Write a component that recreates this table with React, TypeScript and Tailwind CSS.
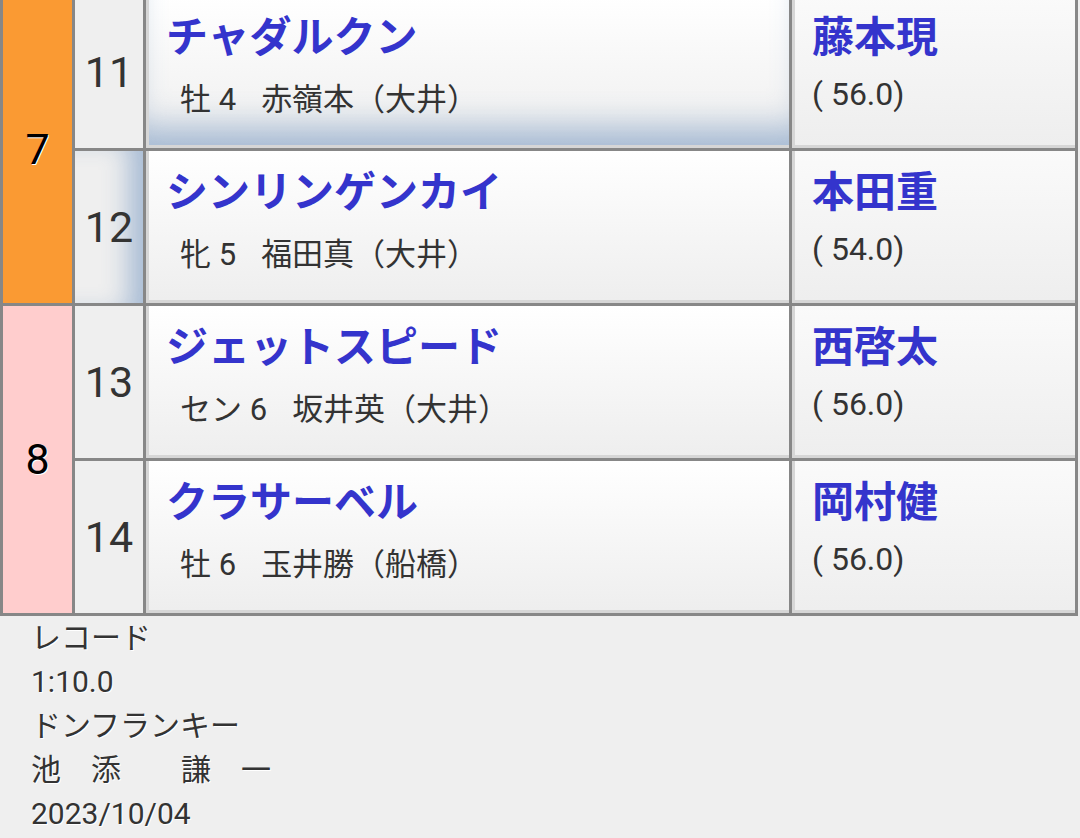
import React from "react";

type Horse = {
  no: number;
  name: string;
  sex: string;
  trainer: string;
  jockey: string;
  wt: string;
  nameCellGlow?: boolean;
  noCellGlow?: boolean;
};

type Waku = { waku: number; bg: string; horses: Horse[] };

const data: Waku[] = [
  {
    waku: 7,
    bg: "bg-[#fa9a33]",
    horses: [
      { no: 11, name: "チャダルクン", sex: "牡 4", trainer: "赤嶺本（大井）", jockey: "藤本現", wt: "( 56.0)", nameCellGlow: true },
      { no: 12, name: "シンリンゲンカイ", sex: "牝 5", trainer: "福田真（大井）", jockey: "本田重", wt: "( 54.0)", noCellGlow: true },
    ],
  },
  {
    waku: 8,
    bg: "bg-[#ffcdcd]",
    horses: [
      { no: 13, name: "ジェットスピード", sex: "セン 6", trainer: "坂井英（大井）", jockey: "西啓太", wt: "( 56.0)" },
      { no: 14, name: "クラサーベル", sex: "牡 6", trainer: "玉井勝（船橋）", jockey: "岡村健", wt: "( 56.0)" },
    ],
  },
];

const font = { fontFamily: "Roboto, 'Noto Sans CJK JP', 'Noto Sans', sans-serif" };

export default function App() {
  return (
    <div className="min-h-[838px] w-[1080px] overflow-hidden bg-[#efefef] text-[#333]" style={font}>
      <div className="-mt-[7px] grid w-[1078px] grid-cols-[69px_68px_643px_283px] grid-rows-[repeat(4,152px)] gap-[3px] bg-[#878787] p-[3px]">
        {data.map((w) => (
          <React.Fragment key={w.waku}>
            <div className={`row-span-2 flex items-center justify-center ${w.bg} text-[43px] text-black [text-shadow:1px_1px_0_#fff]`}>
              {w.waku}
            </div>
            {w.horses.map((h) => (
              <React.Fragment key={h.no}>
                <div
                  className={`flex items-center justify-center bg-[#efefef] text-[43px] text-[#333] ${
                    h.noCellGlow ? "shadow-[inset_-26px_0_26px_-12px_rgba(80,125,180,0.45)]" : ""
                  }`}
                >
                  {h.no}
                </div>
                <div
                  className={`border-b-[3px] border-l-[3px] border-[#d6d6d6] bg-gradient-to-b from-white to-[#eeeeee] pl-[17px] pt-[17px] ${
                    h.nameCellGlow ? "shadow-[inset_0_-34px_32px_-16px_rgba(80,125,180,0.45)]" : ""
                  }`}
                >
                  <div className="h-[50px] text-[42px] font-bold leading-[50px] text-[#3434cc]">{h.name}</div>
                  <div className="mt-[17px] flex pl-[14px] text-[31px] leading-[40px] text-[#333]">
                    <span>{h.sex}</span>
                    <span className="ml-[25px]">{h.trainer}</span>
                  </div>
                </div>
                <div className="border-b-[3px] border-l-[3px] border-[#d6d6d6] bg-gradient-to-b from-[#fafafa] to-[#eeeeee] pl-[17px] pt-[17px]">
                  <div className="h-[50px] text-[42px] font-bold leading-[50px] text-[#3434cc]">{h.jockey}</div>
                  <div className="mt-[11px] text-[32px] leading-[40px] text-[#333]">{h.wt}</div>
                </div>
              </React.Fragment>
            ))}
          </React.Fragment>
        ))}
      </div>
      <div className="pl-[31px] text-[30px] leading-[44px] text-[#333] [text-shadow:1px_1px_0_#fff]">
        <div>レコード</div>
        <div>1:10.0</div>
        <div>ドンフランキー</div>
        <div>池　添　　謙　一</div>
        <div>2023/10/04</div>
      </div>
    </div>
  );
}
